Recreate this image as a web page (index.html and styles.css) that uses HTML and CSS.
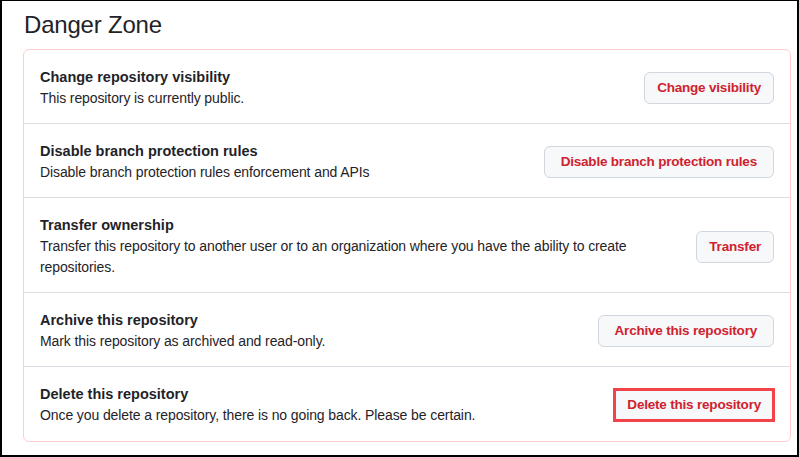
FILE: index.html
```html
<!DOCTYPE html>
<html lang="en">
<head>
<meta charset="utf-8">
<title>Danger Zone</title>
<link rel="stylesheet" href="styles.css">
</head>
<body>
<div class="frame">
  <h2 class="subhead">Danger Zone</h2>
  <div class="danger-box">
    <div class="row">
      <div class="info">
        <div class="row-title">Change repository visibility</div>
        <div class="row-desc">This repository is currently public.</div>
      </div>
      <button class="btn">Change visibility</button>
    </div>
    <div class="row">
      <div class="info">
        <div class="row-title">Disable branch protection rules</div>
        <div class="row-desc">Disable branch protection rules enforcement and APIs</div>
      </div>
      <button class="btn btn-wide">Disable branch protection rules</button>
    </div>
    <div class="row">
      <div class="info">
        <div class="row-title">Transfer ownership</div>
        <div class="row-desc">Transfer this repository to another user or to an organization where you have the ability to create repositories.</div>
      </div>
      <button class="btn">Transfer</button>
    </div>
    <div class="row">
      <div class="info">
        <div class="row-title">Archive this repository</div>
        <div class="row-desc">Mark this repository as archived and read-only.</div>
      </div>
      <button class="btn btn-wide">Archive this repository</button>
    </div>
    <div class="row">
      <div class="info">
        <div class="row-title">Delete this repository</div>
        <div class="row-desc">Once you delete a repository, there is no going back. Please be certain.</div>
      </div>
      <button class="btn btn-highlight">Delete this repository</button>
    </div>
  </div>
</div>
</body>
</html>
```
FILE: styles.css
```css
* { box-sizing: border-box; }
html, body { margin: 0; padding: 0; background: #fff; }
body {
  font-family: "Liberation Sans", Arial, sans-serif;
  color: #1f2328;
}
.frame {
  width: 799px;
  height: 457px;
  border-style: solid;
  border-color: #000;
  border-width: 1px 2px 2px 2px;
  padding: 6px 6px 0 21px;
  overflow: hidden;
}
.subhead {
  margin: 0 0 6px 0;
  font-size: 24px;
  line-height: 36px;
  font-weight: 400;
  letter-spacing: -0.2px;
  padding-left: 1px;
}
.danger-box {
  border: 1px solid #ffcfd0;
  border-radius: 6px;
}
.row {
  display: flex;
  align-items: center;
  gap: 16px;
  padding: 17px 16px 14px 16px;
  border-top: 1px solid #d8dee4;
}
.row:first-child { border-top: 0; }
.row:last-child { padding-bottom: 15px; }
.info { flex: 1; min-width: 0; }
.row-title {
  font-size: 14.5px;
  font-weight: 700;
  line-height: 21px;
}
.row-desc {
  font-size: 14px;
  line-height: 21px;
  letter-spacing: -0.1px;
}
.btn {
  flex: none;
  height: 32px;
  padding: 0 12px;
  font-family: "Liberation Sans", Arial, sans-serif;
  font-size: 13.5px;
  font-weight: 700;
  letter-spacing: -0.2px;
  line-height: 20px;
  color: #cf222e;
  background: #f6f8fa;
  border: 1px solid #d0d7de;
  border-radius: 6px;
}
.btn-wide { padding: 0 16px; }
.btn-highlight { position: relative; }
.btn-highlight::after {
  content: "";
  position: absolute;
  top: -2px;
  left: -2px;
  right: -2px;
  bottom: -2px;
  border: 3px solid #f2434b;
}
```
